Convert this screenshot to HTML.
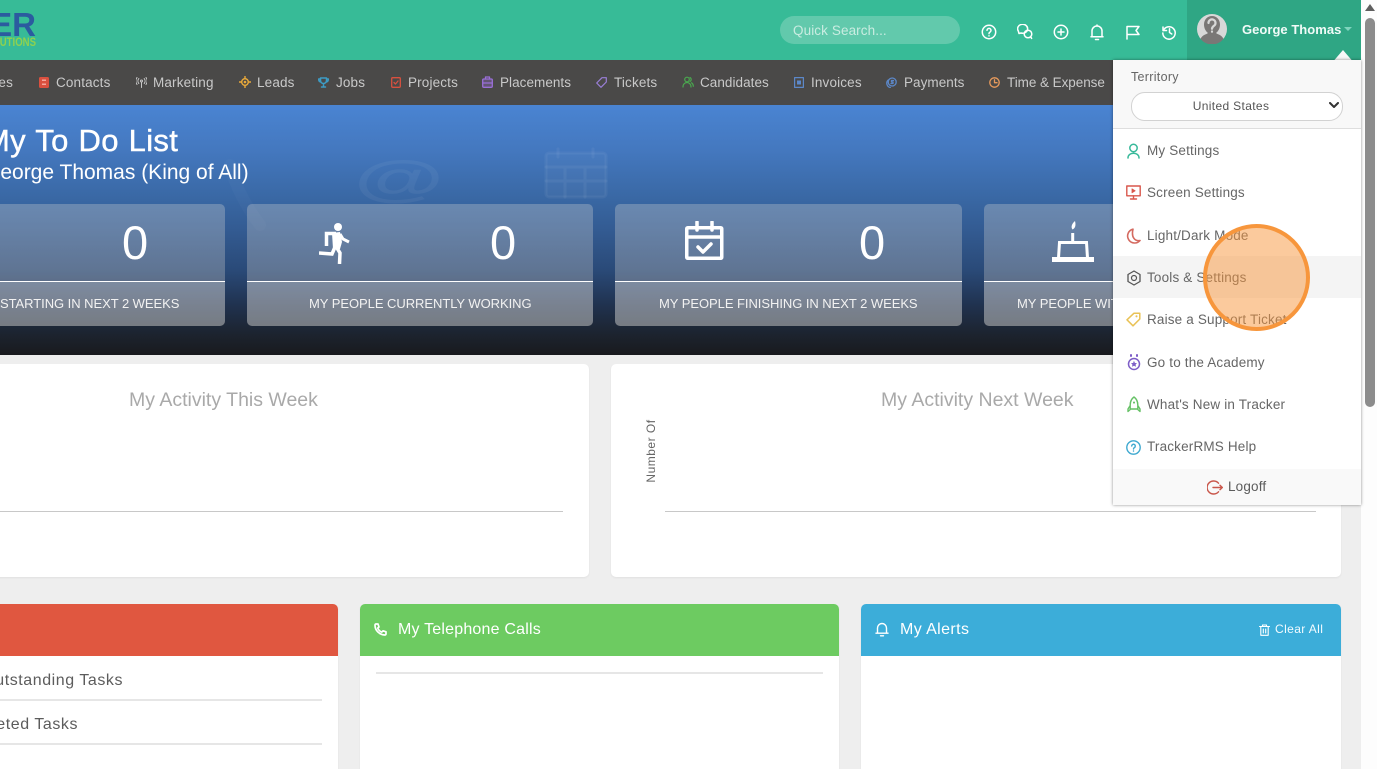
<!DOCTYPE html>
<html lang="en"><head><meta charset="utf-8"><title>TrackerRMS</title>
<style>
html,body{margin:0;padding:0;width:1377px;height:769px;overflow:hidden;background:#eee;font-family:"Liberation Sans",sans-serif}
#p{position:relative;width:1377px;height:769px;overflow:hidden}
#p div,#p span,#p svg{position:absolute}
.t{white-space:nowrap;line-height:20px;height:20px}
svg{fill:none;stroke-linecap:round;stroke-linejoin:round}
.n{color:#c9c9c9;font-size:13.5px;top:73px;letter-spacing:.15px}
.m{color:#666;font-size:13.5px;left:1147px;letter-spacing:.17px}
.card{top:204px;height:122px;border-radius:5px;overflow:hidden;background:rgba(240,232,220,.27)}
.card .b{left:0;right:0;top:77px;bottom:0;border-top:1.5px solid #fff;background:rgba(255,255,255,.2)}
.num{color:#fff;font-size:47px;line-height:20px;height:20px}
.lab{color:#f2f2f2;font-size:13px;letter-spacing:-.05px}
.wc{background:#fff;border-radius:5px;box-shadow:0 1px 2px rgba(0,0,0,.06)}
.ht{color:#fff;font-size:16px;top:620px;letter-spacing:.2px}
.tk{font-size:16px;color:#5c5c5c;letter-spacing:.55px;text-align:right}
.ct{font-size:19.5px;color:#a9a9a9;top:390px}
</style></head><body><div id="p">

<!-- header -->
<div style="left:0;top:0;width:1361px;height:60px;background:#37bb97"></div>
<span class="t" style="left:-40px;top:10px;width:76px;text-align:right;height:30px;line-height:30px;font-size:33px;font-weight:700;color:#2b5b9f">ER</span>
<span class="t" style="left:-40px;top:32px;width:76px;text-align:right;font-size:12px;font-weight:700;color:#8fd14f;transform:scaleX(.8);transform-origin:right center">UTIONS</span>

<div style="left:780px;top:16px;width:180px;height:28px;border-radius:14px;background:#62c9ac"></div>
<span class="t" style="left:793px;top:21px;font-size:13.5px;color:#c9ece1;letter-spacing:.1px">Quick Search...</span>

<svg style="left:981px;top:24px" width="16" height="16" viewBox="0 0 16 16" stroke="#fff" stroke-width="1.5"><circle cx="8" cy="8" r="6.7"/><path d="M6 6.300a2 2 0 1 1 3 1.800c-.7.4-1 .8-1 1.500"/><path d="M8 11.800v.1"/></svg>
<svg style="left:1017px;top:24px" width="16" height="16" viewBox="0 0 16 16" stroke="#fff" stroke-width="1.5"><path d="M2 10.500 1.300 8A5 4.500 0 1 1 4 10l-2 .5z" transform="translate(0 -1)"/><circle cx="11" cy="10" r="3.800"/><path d="M13.800 12.800l.8 1.600"/></svg>
<svg style="left:1053px;top:24px" width="16" height="16" viewBox="0 0 16 16" stroke="#fff" stroke-width="1.5"><circle cx="8" cy="8" r="6.700"/><path d="M8 5v6M5 8h6"/></svg>
<svg style="left:1089px;top:24px" width="16" height="17" viewBox="0 0 16 17" stroke="#fff" stroke-width="1.5"><path d="M3 12.500V7a5 5 0 0 1 10 0v5.500M2 12.800h12M6.500 15.500h3M8 1v1"/></svg>
<svg style="left:1125px;top:24px" width="16" height="16" viewBox="0 0 16 16" stroke="#fff" stroke-width="1.5"><path d="M2 15V2.500h12l-3 4 3 4H2"/></svg>
<svg style="left:1161px;top:24px" width="16" height="16" viewBox="0 0 16 16" stroke="#fff" stroke-width="1.5"><path d="M2 3v3.500h3.500"/><path d="M2.300 6.500A6.200 6.200 0 1 1 1.800 9"/><path d="M8.500 4.800v3.700l2.300 1.500"/></svg>

<div style="left:1187px;top:0;width:174px;height:60px;background:#2fa684"></div>
<svg style="left:1197px;top:14px" width="30" height="30" viewBox="0 0 30 30"><circle cx="15" cy="15" r="15" fill="#d8d8d8"/><path d="M3.500 25c2-4.500 6-4.500 7.500-6-2.500-2-4-5-4-8.500C7 5.500 10.500 2 15 2s8 3.500 8 8.500c0 3.500-1.500 6.500-4 8.500 1.500 1.500 5.500 1.500 7.500 6a15 15 0 0 1-23 0z" fill="#7a7776"/><path d="M11.500 9a3.500 3.500 0 1 1 5.500 2.800c-1.200.9-2 1.500-2 3M15 17.500v.2" stroke="#d8d8d8" stroke-width="2.200"/></svg>
<span class="t" style="left:1242px;top:20px;font-size:13px;font-weight:700;color:#f1fbf8;letter-spacing:.03px">George Thomas</span>
<svg style="left:1344px;top:27px" width="8" height="4" viewBox="0 0 8 4"><path d="M0 0h8L4 4z" fill="#7fd4bd"/></svg>

<!-- nav -->
<div style="left:0;top:60px;width:1361px;height:45px;background:#4a4948"></div>
<span class="t n" style="left:-87px;width:100px;text-align:right">Companies</span>
<span class="t n" style="left:56px">Contacts</span>
<span class="t n" style="left:153px">Marketing</span>
<span class="t n" style="left:257px">Leads</span>
<span class="t n" style="left:336px">Jobs</span>
<span class="t n" style="left:408px">Projects</span>
<span class="t n" style="left:500px;letter-spacing:.05px">Placements</span>
<span class="t n" style="left:614px">Tickets</span>
<span class="t n" style="left:700px;letter-spacing:.05px">Candidates</span>
<span class="t n" style="left:811px">Invoices</span>
<span class="t n" style="left:904px;letter-spacing:.05px">Payments</span>
<span class="t n" style="left:1007px;letter-spacing:-.05px">Time &amp; Expense</span>

<svg style="left:39px;top:77px" width="10" height="11" viewBox="0 0 10 11"><rect width="10" height="11" rx="1.500" fill="#d9503f"/><rect x="3" y="2.500" width="4" height="1.500" fill="#f3a79d"/><rect x="3" y="6.500" width="4" height="1.500" fill="#f3a79d"/></svg>
<svg style="left:136px;top:77px" width="11" height="11" viewBox="0 0 11 11" stroke="#c9c9c9" stroke-width="1"><circle cx="5.500" cy="4" r="1"/><path d="M5.500 5v5.500M2.800 1.500a4 4 0 0 0 0 5M8.200 1.500a4 4 0 0 1 0 5M1 .5a6 6 0 0 0 0 7M10 .5a6 6 0 0 1 0 7"/></svg>
<svg style="left:239px;top:76px" width="12" height="12" viewBox="0 0 12 12" stroke="#e9a93a" stroke-width="1.400"><circle cx="6" cy="6" r="3.300"/><circle cx="6" cy="6" r=".6"/><path d="M6 .3v2M6 9.700v2M.3 6h2M9.700 6h2"/></svg>
<svg style="left:318px;top:77px" width="11" height="11" viewBox="0 0 11 11" stroke="#3d9cc5" stroke-width="1.500"><path d="M2.500 1h6v2.500a3 3 0 0 1-6 0zM2.500 2H.7c0 2 .8 2.800 2 3M8.500 2h1.800c0 2-.8 2.800-2 3M5.500 6.500V9M3.500 10h4"/></svg>
<svg style="left:391px;top:77px" width="10" height="11" viewBox="0 0 10 11" stroke="#d9503f" stroke-width="1.300"><rect x=".7" y=".7" width="8.600" height="9.600" rx="1"/><path d="M3 5.500l1.500 1.500L7 4"/></svg>
<svg style="left:482px;top:76px" width="11" height="12" viewBox="0 0 11 12" stroke="#9a6fd8" stroke-width="1.300"><rect x=".7" y="3" width="9.600" height="8.300" rx="1" fill="#9a6fd8" fill-opacity=".3"/><path d="M3.500 3V1h4v2M.7 7h9.600"/></svg>
<svg style="left:596px;top:77px" width="11" height="11" viewBox="0 0 11 11" stroke="#9a7fd8" stroke-width="1.200"><path d="M6 .7h4.300V5L5 10.300.7 6z"/></svg>
<svg style="left:682px;top:76px" width="12" height="12" viewBox="0 0 12 12" stroke="#4aa84f" stroke-width="1.200"><circle cx="5" cy="3.500" r="2.300"/><path d="M1 11c0-3 2-4.500 4-4.500s4 1.500 4 4.500M8 1.500a2.300 2.300 0 0 1 0 4M9.500 6.800c1 .6 1.800 1.800 1.800 3.500"/></svg>
<svg style="left:794px;top:77px" width="10" height="11" viewBox="0 0 10 11"><rect x=".6" y=".6" width="8.800" height="9.800" fill="none" stroke="#5c88c9" stroke-width="1.200"/><rect x="3" y="3.500" width="4" height="4" fill="#5c88c9"/></svg>
<svg style="left:886px;top:77px" width="11" height="11" viewBox="0 0 11 11" stroke="#5c88c9" stroke-width="1.300"><circle cx="6.200" cy="5" r="4"/><path d="M2.300 3a4.300 4.300 0 0 0 2 7.500M7.500 3.500H5.500v1.500h1.500v1.500H5"/></svg>
<svg style="left:989px;top:77px" width="11" height="11" viewBox="0 0 11 11" stroke="#e79a5c" stroke-width="1.300"><circle cx="5.500" cy="5.500" r="4.700"/><path d="M5.500 2.800v2.900H8"/></svg>

<!-- hero -->
<div style="left:0;top:105px;width:1361px;height:250px;background:linear-gradient(180deg,#4a84d2 0%,#4478bf 18%,#3a69a6 36%,#335b92 50%,#2a4a78 66%,#20324f 80%,#1c232e 92%,#191a1e 100%);overflow:hidden">
<span style="left:358px;top:28px;font-size:84px;line-height:90px;font-weight:700;color:rgba(255,255,255,.05);transform:scale(1.1,.6)">@</span>
<svg style="left:543px;top:42px" width="68" height="52" viewBox="0 0 68 52" stroke="rgba(255,255,255,.05)" stroke-width="3"><rect x="3" y="6" width="60" height="44" rx="3" fill="rgba(255,255,255,.03)"/><path d="M3 20h60M3 34h60M22 20v30M42 20v30M15 2v8M50 2v8"/></svg>
<svg style="left:200px;top:40px" width="160" height="180" viewBox="0 0 160 180" stroke="rgba(255,255,255,.025)" stroke-width="12"><path d="M30 20c5 20 15 40 30 60"/></svg>
</div>
<span class="t" style="left:-16px;top:131px;font-size:31px;letter-spacing:.3px;word-spacing:1px;color:#fff;-webkit-text-stroke:.4px #fff">My To Do List</span>
<span class="t" style="left:-16px;top:163px;font-size:21px;color:#fff">George Thomas (King of All)</span>

<div class="card" style="left:-120px;width:345px"><div class="b"></div></div>
<div class="card" style="left:247px;width:346px"><div class="b"></div></div>
<div class="card" style="left:615px;width:347px"><div class="b"></div></div>
<div class="card" style="left:984px;width:346px"><div class="b"></div></div>
<span class="t num" style="left:122px;top:233px">0</span>
<span class="t num" style="left:490px;top:233px">0</span>
<span class="t num" style="left:859px;top:233px">0</span>
<span class="t lab" style="left:0;top:294px">STARTING IN NEXT 2 WEEKS</span>
<span class="t lab" style="left:309px;top:294px">MY PEOPLE CURRENTLY WORKING</span>
<span class="t lab" style="left:659px;top:294px">MY PEOPLE FINISHING IN NEXT 2 WEEKS</span>
<span class="t lab" style="left:1017px;top:294px">MY PEOPLE WITH BIRTHDAYS</span>

<svg style="left:319px;top:222px" width="31" height="42" viewBox="0 0 31 42"><circle cx="19" cy="5" r="4" fill="#fff"/><path d="M13 11l8-1 2 10-2 7h-7z" fill="#fff"/><g stroke="#fff" stroke-linecap="butt" stroke-linejoin="miter"><path d="M17 11.500H7.500V24" stroke-width="3.500"/><path d="M21 12l3 5 6 3" stroke-width="3"/><path d="M16 25l-3 7-13-1" stroke-width="3.500"/><path d="M18 26l3 5-.5 11" stroke-width="3.500"/></g></svg>
<svg style="left:684px;top:221px" width="40" height="40" viewBox="0 0 40 40" stroke="#fff" stroke-width="3.500" stroke-linecap="butt" stroke-linejoin="miter"><rect x="2.750" y="6.750" width="35" height="30.500" rx="1"/><path d="M2.750 16h35M13 1v8M28 1v8"/><path d="M14 26l5 5 8-8"/></svg>
<svg style="left:1052px;top:221px" width="42" height="42" viewBox="0 0 42 42"><path d="M0 36h42v5H0z" fill="#fff"/><path d="M6.500 37l1-15.500h27l1 15.500" stroke="#fff" stroke-width="3" stroke-linecap="butt" stroke-linejoin="miter"/><path d="M20.700 12v9" stroke="#fff" stroke-width="3" stroke-linecap="butt"/><path d="M23 0c1 4 .5 7-2.500 8.500C18.500 6 20 2.500 23 0z" fill="#fff"/></svg>

<!-- charts -->
<div class="wc" style="left:-60px;top:364px;width:649px;height:213px"></div>
<div class="wc" style="left:611px;top:364px;width:730px;height:213px"></div>
<span class="t ct" style="left:129px">My Activity This Week</span>
<span class="t ct" style="left:881px">My Activity Next Week</span>
<span class="t" style="left:611px;top:441px;width:80px;text-align:center;font-size:12px;color:#666;transform:rotate(-90deg);letter-spacing:.5px">Number Of</span>
<div style="left:0;top:511px;width:563px;height:1px;background:#c8c8c8"></div>
<div style="left:665px;top:511px;width:651px;height:1px;background:#c8c8c8"></div>

<!-- bottom cards -->
<div class="wc" style="left:-60px;top:604px;width:398px;height:180px;overflow:hidden"><div style="left:0;top:0;right:0;height:52px;background:#e05740"></div></div>
<span class="t tk" style="left:-40px;top:671px;width:163px">Outstanding Tasks</span>
<div style="left:0;top:699px;width:322px;height:2px;background:#e6e6e6"></div>
<span class="t tk" style="left:-62px;top:715px;width:140px">Completed Tasks</span>
<div style="left:0;top:743px;width:322px;height:2px;background:#e6e6e6"></div>

<div class="wc" style="left:360px;top:604px;width:479px;height:180px;overflow:hidden"><div style="left:0;top:0;right:0;height:52px;background:#6dcb61"></div></div>
<svg style="left:374px;top:623px" width="13" height="13" viewBox="0 0 13 13" stroke="#fff" stroke-width="1.700"><path d="M2 1h2l1 3-1.300 1c.7 1.800 2.300 3.400 4.100 4.100L9 7.800l3 1v2c0 .7-.5 1.200-1.200 1.200C5.500 11.800 1 7.500 1 2.200 1 1.500 1.400 1 2 1z"/></svg>
<span class="t ht" style="left:398px">My Telephone Calls</span>
<div style="left:376px;top:672px;width:447px;height:2px;background:#e6e6e6"></div>

<div class="wc" style="left:861px;top:604px;width:480px;height:180px;overflow:hidden"><div style="left:0;top:0;right:0;height:52px;background:#3cadd9"></div></div>
<svg style="left:875px;top:622px" width="14" height="15" viewBox="0 0 14 15" stroke="#fff" stroke-width="1.400"><path d="M2.500 11V6a4.500 4.500 0 0 1 9 0v5M1 11.200h12M5.500 13.800h3"/></svg>
<span class="t ht" style="left:900px;letter-spacing:.4px">My Alerts</span>
<svg style="left:1259px;top:624px" width="11" height="12" viewBox="0 0 11 12" stroke="#fff" stroke-width="1.100"><path d="M.5 2.500h10M3.500 2.500V1h4v1.500M1.800 2.500v8.800h7.400V2.500M4.300 5v4M6.700 5v4"/></svg>
<span class="t" style="left:1275px;top:619px;font-size:12px;color:#f2fbff;letter-spacing:.4px">Clear All</span>

<!-- scrollbar -->
<div style="left:1361px;top:0;width:16px;height:769px;background:#fdfdfd"></div>
<svg style="left:1365px;top:4px" width="10" height="7" viewBox="0 0 10 7"><path d="M5 0l5 7H0z" fill="#5f5f5f"/></svg>
<div style="left:1365px;top:18px;width:10px;height:389px;border-radius:5px;background:#8c8c8c"></div>

<!-- dropdown -->
<svg style="left:1334px;top:50px" width="18" height="11" viewBox="0 0 18 11"><path d="M9 0l9 10.500H0z" fill="#f8f8f8"/></svg>
<div style="left:1113px;top:60px;width:248px;height:445px;background:#fff;box-shadow:0 0 3px rgba(0,0,0,.45)">
  <div style="left:0;top:0;right:0;height:68px;background:#f8f8f8;border-bottom:1px solid #dedede"></div>
  <div style="left:0;top:196px;right:0;height:42px;background:#f4f4f4"></div>
  <div style="left:0;top:409px;right:0;height:36px;background:#f9f9f9"></div>
  <div style="left:18px;top:32px;width:210px;height:27px;border:1px solid #d2d2d2;border-radius:14px;background:#fff"></div>
</div>
<span class="t" style="left:1131px;top:67px;font-size:12.500px;color:#666;letter-spacing:.3px">Territory</span>
<span class="t" style="left:1132px;top:96px;width:198px;text-align:center;font-size:12px;color:#555;letter-spacing:.35px">United States</span>
<svg style="left:1329px;top:102px" width="10" height="7" viewBox="0 0 10 7" stroke="#333" stroke-width="2"><path d="M1 1l4 4 4-4"/></svg>

<span class="t m" style="top:141px">My Settings</span>
<span class="t m" style="top:183px">Screen Settings</span>
<span class="t m" style="top:226px">Light/Dark Mode</span>
<span class="t m" style="top:268px">Tools &amp; Settings</span>
<span class="t m" style="top:310px">Raise a Support Ticket</span>
<span class="t m" style="top:353px">Go to the Academy</span>
<span class="t m" style="top:395px">What's New in Tracker</span>
<span class="t m" style="top:437px">TrackerRMS Help</span>
<span class="t m" style="left:1228px;top:477px;color:#5c5c5c">Logoff</span>

<svg style="left:1126px;top:143px" width="15" height="16" viewBox="0 0 15 16" stroke="#38b99a" stroke-width="1.500"><circle cx="7.500" cy="5" r="3.700"/><path d="M2 15c0-3 2.500-4.800 5.500-4.800S13 12 13 15"/></svg>
<svg style="left:1126px;top:185px" width="15" height="15" viewBox="0 0 15 15" stroke="#d9574c" stroke-width="1.400"><rect x=".8" y="1" width="13.400" height="9.800"/><path d="M7.500 11v2.800M4.500 14h6"/><path d="M6 3.800l3.200 2-3.200 2z" fill="#d9574c" stroke-width=".8"/></svg>
<svg style="left:1126px;top:228px" width="15" height="16" viewBox="0 0 15 16" stroke="#d46a60" stroke-width="1.600"><path d="M7 1.200A7 7 0 1 0 14 12.500c-5 1-9-3-7-11.300z"/></svg>
<svg style="left:1126px;top:270px" width="16" height="16" viewBox="0 0 16 16" stroke="#555" stroke-width="1.300"><path d="M8 1l6 3.500v7L8 15l-6-3.500v-7z"/><circle cx="8" cy="8" r="2.500" stroke-width="1.200"/></svg>
<svg style="left:1126px;top:312px" width="15" height="15" viewBox="0 0 15 15" stroke="#e9c256" stroke-width="1.500"><path d="M8 1.200h5.800V7L7 13.800 1 7.800z"/><path d="M10.500 4.300v.1" stroke-width="2"/></svg>
<svg style="left:1127px;top:354px" width="14" height="17" viewBox="0 0 14 17" stroke="#7d5dc7" stroke-width="1.500"><path d="M4 1v1M10 1v1" stroke-width="2"/><circle cx="7" cy="10" r="5.500"/><path d="M7 7.500l.8 1.700 1.800.2-1.300 1.200.4 1.800L7 11.500l-1.700.9.400-1.800-1.300-1.200 1.800-.2z" fill="#7d5dc7" stroke-width=".5"/></svg>
<svg style="left:1127px;top:396px" width="14" height="17" viewBox="0 0 14 17" stroke="#66c166" stroke-width="1.400"><path d="M7 1c2.800 2 3.800 5 3.800 8v4H3.200V9C3.200 6 4.200 3 7 1zM3.200 9.500L1 13v2.500l2.200-2M10.800 9.500L13 13v2.500l-2.200-2"/><path d="M7 6.500v.1" stroke-width="2"/></svg>
<svg style="left:1126px;top:440px" width="15" height="15" viewBox="0 0 15 15" stroke="#3fa9d0" stroke-width="1.400"><circle cx="7.500" cy="7.500" r="6.700"/><path d="M5.700 6a1.800 1.800 0 1 1 2.700 1.600c-.6.400-.9.700-.9 1.400M7.500 11v.1"/></svg>
<svg style="left:1207px;top:480px" width="16" height="15" viewBox="0 0 16 15" stroke="#c9574b" stroke-width="1.400"><path d="M11.500 3.200A6.500 6.500 0 1 0 11.500 11.800"/><path d="M6 7.500h9.300M13 5.300l2.300 2.200L13 9.700"/></svg>

<!-- highlight circle -->
<div style="left:1203px;top:224px;width:99px;height:99px;border:4px solid #f7963c;border-radius:50%;background:rgba(247,150,60,.5)"></div>
</div></body></html>
